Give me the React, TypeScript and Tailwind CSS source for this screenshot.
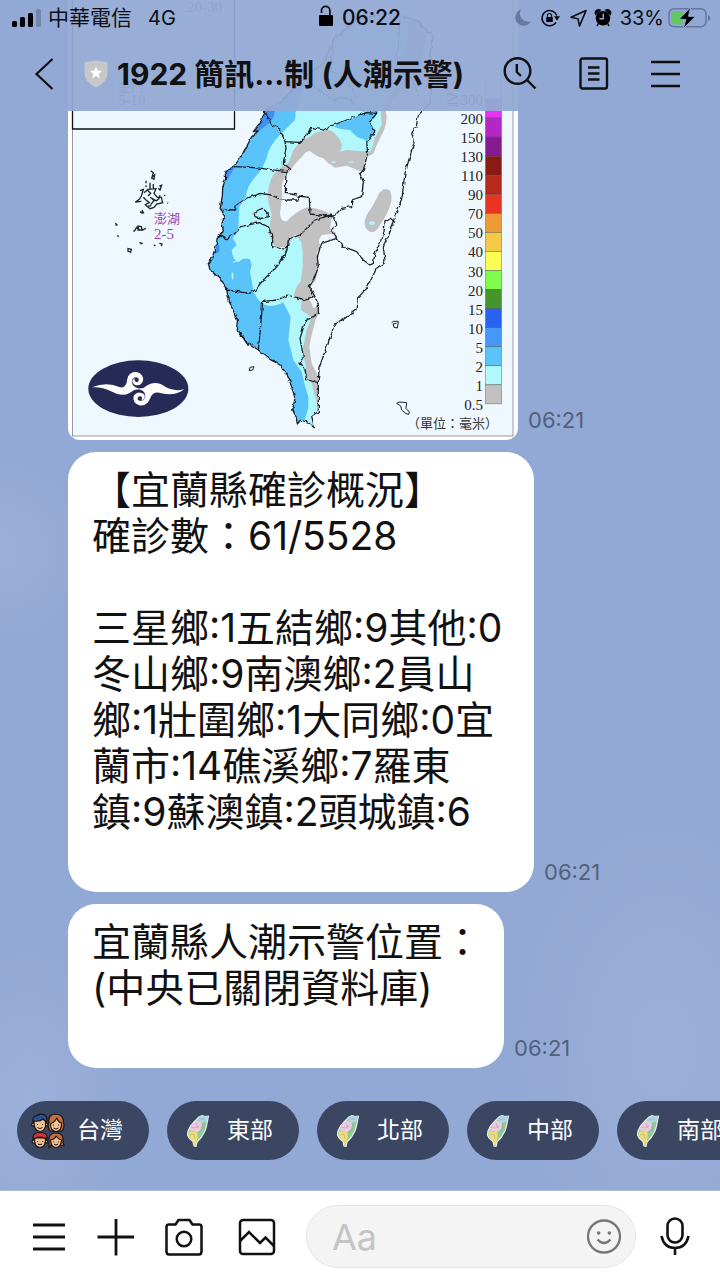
import React from "react";

const SANS = "font-['Inter','Noto_Sans_CJK_TC',sans-serif]";

const scale: { color: string; label: string }[] = [
  { color: "#dfe3f5", label: "" },
  { color: "#e733f5", label: "≧300" },
  { color: "#b625c6", label: "200" },
  { color: "#861a92", label: "150" },
  { color: "#8a1b12", label: "130" },
  { color: "#b8281b", label: "110" },
  { color: "#e83423", label: "90" },
  { color: "#ee9a37", label: "70" },
  { color: "#f4c945", label: "50" },
  { color: "#fffd54", label: "40" },
  { color: "#80fb4c", label: "30" },
  { color: "#45962a", label: "20" },
  { color: "#2962f0", label: "15" },
  { color: "#4598f7", label: "10" },
  { color: "#5ac4fa", label: "5" },
  { color: "#b1f8fd", label: "2" },
  { color: "#c1c1c1", label: "1" },
];

const islandPath =
  "M700 -190 L650 -240 L560 -260 L470 -240 L400 -180 L370 -110 L300 -60 L250 0 L195 33 L185 60 L160 95 L175 92 L155 110 L145 130 L130 160 L105 195 L75 215 L77 235 L68 262 L67 290 L60 328 L74 345 L66 372 L70 390 L52 415 L45 450 L33 480 L25 490 L30 510 L65 540 L80 570 L90 610 L112 660 L110 685 L120 700 L145 730 L175 750 L210 778 L240 795 L262 825 L275 860 L285 895 L278 930 L288 950 L292 972 L302 960 L325 968 L343 983 L335 948 L355 935 L355 850 L357 805 L380 740 L403 675 L435 655 L468 630 L472 595 L500 565 L530 505 L555 485 L550 440 L565 410 L580 360 L605 300 L615 220 L635 150 L643 125 L635 100 L650 75 L655 45 L690 10 L700 -80 L690 -140 Z";

function RainMap() {
  return (
    <svg
      viewBox="68 0 450 440"
      className="block h-auto w-full"
      role="img"
      aria-label="雨量圖"
    >
      <defs>
        <clipPath id="island">
          <path d={islandPath} />
        </clipPath>
        <filter id="rough" x="-5%" y="-5%" width="110%" height="110%">
          <feTurbulence type="fractalNoise" baseFrequency="0.08" numOctaves="1" seed="4" />
          <feDisplacementMap in="SourceGraphic" scale="13" xChannelSelector="R" yChannelSelector="G" />
        </filter>
      </defs>
      <rect x="68" y="0" width="450" height="440" fill="#fff" />
      <rect x="72.5" y="-5" width="440.5" height="441" fill="#eff8ff" stroke="#999" />
      <path d="M72.5 0V129H234.5V0" fill="none" stroke="#111" strokeWidth="1.3" />
      <g fontFamily="'Liberation Serif','Noto Sans CJK TC',serif" fontSize="15" fill="#555">
        <text x="187" y="12">20-30</text>
        <text x="118" y="91" fontSize="13">金門</text>
        <text x="118" y="105">5-10</text>
      </g>
      <g transform="translate(200 100) scale(.33333)">
        <g clipPath="url(#island)">
          <path
            fill="#c1c1c1"
            d="M0 -300H700L660 -100L557 33Q565 60 552 90L530 135L521 160L500 172L486 215L440 197L405 203L385 190L370 175Q350 170 330 153Q315 155 308 168Q285 190 262 222Q240 245 247 285L240 340Q243 370 262 362Q285 337 320 322Q380 328 396 350L390 385L410 400L365 405Q350 425 362 435L350 460L357 500L345 545L330 560L345 590Q320 595 335 610L340 625L357 612L358 640L348 655L335 705L328 740L335 790L355 830V930L330 990H0Z"
          />
          <path
            fill="#b1f8fd"
            d="M0 -300H640L600 -60L542 33L545 75L525 115L512 155L440 150L418 155Q433 140 420 120Q405 95 380 88L345 100L330 110L300 125L280 150L265 190Q225 205 212 240Q200 270 206 310L215 345L205 400L225 442L262 440L285 403L303 425L308 455L308 500L302 545Q285 560 281 590L305 600L303 630L335 652L320 690L308 750L318 800L315 835L335 850L350 905L355 990H0Z"
          />
          <path
            fill="#5ac4fa"
            d="M0 -300H400L288 33L285 60L255 90Q220 120 205 155Q195 200 165 232Q140 260 138 290L118 320L115 390L98 415L110 435L95 450Q98 480 115 487Q130 470 150 478L155 495L150 515L160 570Q165 590 185 610Q210 628 250 607L272 650L265 720L280 780L305 815Q315 860 325 890L325 925L312 965L300 1000H0Z"
          />
          <path
            fill="#5ac4fa"
            d="M402 80L420 65L450 60L500 33H535L525 50L510 65L525 95L500 122L470 110L450 90Q420 88 402 80Z"
          />
          <path
            fill="#4090f3"
            d="M190 30L225 33Q220 65 200 75L150 115L145 90ZM70 208L105 200L85 235L75 232ZM40 435H58V455L45 462Z"
          />
          <path fill="#b1f8fd" d="M285 38L330 33L340 40L290 45ZM95 515Q103 518 99 537Q94 545 95 515ZM97 485L112 482L102 489Z" />
        </g>
        <path fill="#c1c1c1" d="M550 268Q578 260 574 305Q565 340 540 375Q525 405 505 393Q485 375 500 345Q525 310 537 280Z" />
        <ellipse cx="516" cy="370" rx="8" ry="6" fill="#b1f8fd" />
        <path fill="#b1f8fd" d="M393 187Q400 180 408 187Q400 193 393 187ZM444 186Q453 182 462 186Q453 190 444 186Z" />
        <path fill="#eff8ff" d="M332 605L345 592V605L357 612L345 624Z" />
        <g fill="none" stroke="#1b1f26" strokeWidth="3.8" strokeLinejoin="round" filter="url(#rough)">
          <path d={islandPath} />
          <path d="M195 33L215 75L240 87L255 125L300 127L325 100L335 82L370 90L400 75L440 60L470 48L500 38L530 40L510 65L525 95L500 125L503 160L490 210L480 222L490 245L485 290L455 300L455 320L425 325L405 345L395 350L360 345L330 342L328 292L295 288L292 300L258 300M255 125L258 145L250 190L272 208L258 215L256 280L290 285" />
          <path d="M105 200L150 202L185 205L260 215M60 328L105 330L110 315L140 295L180 280L215 285L235 295L260 298M52 405L80 416L105 400L125 380L175 368L205 380L215 405L215 440L250 447L262 445L265 418L300 405L345 360L390 345L405 355L410 375L392 390L410 415L365 430L352 470L355 500L345 530L328 560L345 590L355 615L355 640L330 655L317 662L300 715L310 770L300 790L315 810L320 840L355 848" />
          <path d="M262 447L255 465L240 485L215 515L190 540L165 570L150 580L80 570M175 750L180 700L188 605L230 600L262 585L300 595L312 603L345 590M410 415L430 440L470 455L490 480L510 495L520 490L525 460L545 420L552 395L555 365L575 355L585 365" />
          <path d="M163 340L175 330L188 325L205 342L205 350L185 355L165 350ZM112 685L140 730M115 690L125 700L120 705L135 718L145 738" />
          <path d="M250 0L285 -35L330 -50L400 0L440 -10L470 20L500 38M400 -180L390 -90L440 -60L470 -10M600 -240L590 -100L640 -60L655 -10" strokeWidth="3" />
        </g>
        <path
          d="M575 668L580 664L595 664L594 672L592 684L582 682L579 672L590 670M590 910L598 906L620 908L618 925L628 936L626 943L618 941L605 930L602 918ZM150 802L162 800L158 810L148 812Z"
          fill="none"
          stroke="#1b1f26"
          strokeWidth="3"
        />
      </g>
      <g transform="translate(60 110) scale(.33333)">
        <g fill="none" stroke="#20262e" strokeWidth="4">
          <path d="M272 182L280 188L276 202L284 195L282 208L274 204M258 212V220M258 226V232M270 218V236M280 222V238M298 228L305 226L300 240L295 235M240 242L250 238L244 258L238 268L226 276L244 274M252 248L262 240L272 250L264 258M262 238L288 236L282 250L292 262L304 262L308 278L290 282L282 292L270 296L256 284L268 278L258 270L250 262M276 268L290 272L296 266M262 290L274 286M300 256L296 268M314 254V258M270 262L284 270L272 284M322 278L324 280M240 306L250 308L246 300M240 306L248 310" />
          <path d="M166 340L172 346L166 344M172 376L176 380M220 364L224 362L230 352L236 358L234 348L244 350L246 360L258 355M232 360H250M238 398L246 400L242 403M204 416L214 418L212 426L204 424ZM212 426V430M282 404L286 408M298 400L306 402L304 408" />
        </g>
        <ellipse cx="235" cy="836" rx="150" ry="85" fill="#252a57" />
        <path
          fill="#fff"
          d="M96 832Q140 813 180 832Q199 836 202 806Q208 783 230 786Q252 792 249 812Q242 830 224 824Q210 814 224 805Q222 815 231 817Q239 813 235 805Q226 798 217 808Q212 822 226 832Q246 842 262 826Q290 810 318 832Q342 846 373 838Q345 860 304 850Q280 842 272 862Q262 890 238 886Q216 878 221 858Q233 840 252 852Q260 866 244 872Q250 862 240 858Q230 861 234 870Q250 878 256 862Q258 842 236 838Q222 838 210 848Q185 862 158 846Q128 830 96 832Z"
        />
      </g>
      <g fontFamily="'Liberation Serif','Noto Sans CJK TC',serif" fill="#a43bb0">
        <text x="154" y="223" fontSize="13">澎湖</text>
        <text x="154" y="239" fontSize="15">2-5</text>
      </g>
      <g fontFamily="'Liberation Serif','Noto Sans CJK TC',serif" fontSize="15" fill="#222" textAnchor="end">
        {scale.map((s, i) => (
          <g key={i}>
            <rect x="485.5" y={80 + i * 19.05} width="16" height="19.05" fill={s.color} stroke="#444" strokeOpacity=".55" strokeWidth=".7" />
            <text x="483" y={86 + i * 19.05}>{s.label}</text>
          </g>
        ))}
        <text x="483" y="409.5">0.5</text>
      </g>
      <text x="407" y="428" fontSize="13" fill="#333" fontFamily="'Noto Sans CJK TC',sans-serif">
        （單位：毫米）
      </text>
    </svg>
  );
}

function StatusBar() {
  return (
    <div className="grid h-9 grid-cols-3 items-center text-[20px] text-[#0b0d12]">
      <div className="flex items-center pl-3">
        <svg viewBox="0 0 30 19" className="h-[19px] w-[30px]" aria-hidden="true">
          <rect x="0" y="12" width="5" height="6" rx="1.6" />
          <rect x="8" y="8" width="5" height="10" rx="1.6" />
          <rect x="16" y="4" width="5" height="14" rx="1.6" />
          <rect x="24" y="0" width="5" height="18" rx="1.6" fill="#7386ad" />
        </svg>
        <span className="ml-[6px] text-[21px]">中華電信</span>
        <span className="ml-4">4G</span>
      </div>
      <div className="flex items-center justify-center gap-2">
        <svg viewBox="0 0 15 22" className="-mt-1 h-[22px] w-[15px]" aria-hidden="true">
          <rect x="0" y="10" width="14" height="11" rx="1" />
          <path d="M2.5 8V5.5a4.2 4.2 0 0 1 8.4 0V11" fill="none" stroke="#0b0d12" strokeWidth="1.7" />
        </svg>
        <span className="text-[21px] font-medium">06:22</span>
      </div>
      <div className="flex items-center justify-end pr-[9px]">
        <svg viewBox="0 0 97 20" className="mr-2 h-[20px] w-[97px]" aria-hidden="true">
          <path d="M6 1.5A8.3 8.3 0 1 0 16 13.2A8.2 8.2 0 0 1 6 1.5Z" fill="#66799f" />
          <path d="M41 14.300A7.6 7.6 0 1 1 41.8 7.500" fill="none" stroke="#0b0d12" strokeWidth="1.5" />
          <path d="M39 8.2h6l-3 4.3z" />
          <rect x="31.2" y="9" width="6.6" height="5" rx=".8" />
          <path d="M32.4 9V7.6a2.1 2.1 0 0 1 4.2 0V9" fill="none" stroke="#0b0d12" strokeWidth="1.1" />
          <path d="M71 2.600L56 9.200L63 10.800L64.500 18Z" fill="none" stroke="#0b0d12" strokeWidth="1.6" strokeLinejoin="round" />
          <circle cx="88" cy="10.3" r="7.2" />
          <path d="M80.800 6.5a3.2 3.2 0 0 1 4.5-4.3zM95.200 6.5a3.2 3.2 0 0 0-4.5-4.3zM83.500 15.5l-1.6 2.5M92.500 15.5l1.6 2.5" stroke="#0b0d12" strokeWidth="1.4" />
          <path d="M88.300 5.6v5.2h-3.8" fill="none" stroke="#93a9d5" strokeWidth="1.4" />
        </svg>
        <span>33%</span>
        <svg viewBox="0 0 43 22" className="ml-1 h-[22px] w-[43px]" aria-hidden="true">
          <rect x="1" y="1.8" width="37" height="18" rx="5" fill="none" stroke="#6576a0" strokeWidth="1.5" />
          <path d="M40 8v6q2.5-1 2.5-3T40 8Z" fill="#6576a0" />
          <rect x="3.2" y="4" width="12" height="13.6" rx="3" fill="#64c466" />
          <path d="M22.5 0.5L11 12.4H17.8L15.5 21.5L27.5 9.3H20.5Z" stroke="#93a9d5" strokeWidth="1" />
        </svg>
      </div>
    </div>
  );
}

function TitleBar() {
  return (
    <div className="flex h-[75px] items-center pr-10 pl-[34px]">
      <button aria-label="返回" className="h-8 w-5">
        <svg viewBox="0 0 20 32" className="h-8 w-5" fill="none" stroke="#111" strokeWidth="2.2">
          <path d="M18.5 1L2.5 16L18.5 31" />
        </svg>
      </button>
      <svg viewBox="0 0 24 28" className="ml-[30px] h-7 w-6 shrink-0" aria-hidden="true">
        <path d="M12 .5Q18 1 23.5 2.4V13Q23.5 22 12 27.5Q.5 22 .5 13V2.4Q6 1 12 .5Z" fill="#c6c7c9" />
        <path d="M12 6.5l1.8 3.9 4.2.5-3.1 2.9.8 4.2-3.7-2.1-3.7 2.1.8-4.2L6 10.900l4.200-.5z" fill="#fff" />
      </svg>
      <h1 className="ml-[9px] text-[30px] leading-10 font-bold whitespace-nowrap text-[#111]">1922 簡訊...制 (人潮示警)</h1>
      <div className="ml-auto flex items-center gap-[42px]">
        <button aria-label="搜尋">
          <svg viewBox="0 0 34 36" className="h-9 w-[34px]" fill="none" stroke="#111" strokeWidth="2.4">
            <circle cx="14.500" cy="15" r="12.800" />
            <path d="M24 24L32.500 32.500M13.800 8V16L18 20" />
          </svg>
        </button>
        <button aria-label="記事本">
          <svg viewBox="0 0 30 34" className="h-[34px] w-[30px]" fill="none" stroke="#111" strokeWidth="2.400">
            <rect x="1.500" y="1.500" width="26.500" height="30" rx="2" />
            <path d="M9 10.500H20.500M9 16.500H20.500M9 22.500H20.500" />
          </svg>
        </button>
        <button aria-label="選單">
          <svg viewBox="0 0 29 28" className="h-7 w-[29px]" stroke="#111" strokeWidth="2.400">
            <path d="M0 2H29M0 14H29M0 26H29" />
          </svg>
        </button>
      </div>
    </div>
  );
}

function Message({ children, className = "" }: { children: React.ReactNode; className?: string }) {
  return (
    <div className="flex items-end gap-[10px]">
      <div className={`rounded-[28px] bg-white pt-[15px] pb-[11px] pl-6 text-[39px] leading-[46px] whitespace-pre text-[#111] ${className}`}>
        {children}
      </div>
      <Time />
    </div>
  );
}

function Time() {
  return <time className="pb-2 text-[22px] leading-6 text-[#53607c]">06:21</time>;
}

function FamilyIcon() {
  return (
    <svg viewBox="0 0 34 36" className="h-9 w-[34px]" stroke="#1a1512" strokeWidth="1.200" strokeLinejoin="round" aria-hidden="true">
      <path d="M18 9Q17 1 25 1Q33 2 32.500 10Q34 14 31 18H19Q16 14 18 9Z" fill="#c9703f" />
      <path d="M19.500 11Q24 9 26 5Q27 9 30.500 10Q31 18 25 18.500Q19.500 18 19.500 11Z" fill="#f2c795" />
      <path d="M2 9Q1 4 5 3Q9 0 14 2Q17 4 15.500 9Z" fill="#27509a" />
      <circle cx="2.300" cy="11.500" r="1.600" fill="#f2c795" />
      <circle cx="15.200" cy="11.500" r="1.600" fill="#f2c795" />
      <path d="M3 8Q9 9 12 6L14.500 8.500Q15.500 18 9 18.500Q2.500 18 3 8Z" fill="#f2c795" />
      <path d="M18 29Q17 20 25 20Q33 20 32 29L33 33L29 32H20L18 35Z" fill="#c9703f" />
      <path d="M19.500 27Q24 26 25 23Q27 26 30.500 27Q30 34.500 25 34.500Q20 34.500 19.500 27Z" fill="#f0bd8a" />
      <circle cx="2.800" cy="28.500" r="1.600" fill="#f0bd8a" />
      <circle cx="15" cy="28.500" r="1.600" fill="#f0bd8a" />
      <path d="M3.500 25H14.500Q15 34.500 9 34.500Q3 34.500 3.500 25Z" fill="#f0bd8a" />
      <path d="M2 26Q1 19.500 9 19.500Q17 19.500 16 26Q9 22 2 26Z" fill="#d8303c" />
      <path d="M6.500 11v1M11.500 11v1M6.500 14.500q2.500 2.200 5 0M22.500 11.500v1M27.500 11.500v1M22.500 15q2.500 2 5 0M6.500 28v1M11.500 28v1M7 31q2 1.500 4 0M22.800 28.500v1M27.300 28.500v1M23 31.200q2 1.500 4 0" fill="none" strokeWidth="1" />
    </svg>
  );
}

function TaiwanIcon() {
  return (
    <svg viewBox="0 0 24 34" className="h-[34px] w-6" strokeLinejoin="round" aria-hidden="true">
      <path d="M13 3L16 1.500L19 2.500L22.500 2L21.500 7L20.500 12L19 17L15.500 23L11 28L10 32.500L8 32L7 27.500L3 24L1.500 21L2 17L4.500 12L8.500 7.500Z" fill="#8fcb98" stroke="#eef2ee" strokeWidth="1.200" />
      <path d="M13 3L16 1.500L19 2.500L22.500 2L20.500 7.500L16 8.500L11.500 6Z" fill="#a9d8e6" />
      <path d="M10.500 6.500L16.500 8.500L15 15L11 18.500L3 16L5.500 11Z" fill="#ebc9de" />
      <path d="M2.500 17L11.500 18.500L11.500 24L9.500 31L8 30.500L7.500 27L3 22.500Z" fill="#f1df6a" />
      <path d="M5 13L9 14L13 12M10 9L12 14M4 21L8 20L9 25M16 9L17 14L13 19M13 5L19 5" fill="none" stroke="#9f96a3" strokeWidth=".5" />
    </svg>
  );
}

function Chip({ label, family = false }: { label: string; family?: boolean }) {
  return (
    <button className="flex h-[59px] w-[132px] shrink-0 items-center rounded-full bg-[#3b4662] pl-[14px] text-[23px] text-white">
      <span className="flex w-[34px] justify-center">{family ? <FamilyIcon /> : <TaiwanIcon />}</span>
      <span className="ml-3">{label}</span>
    </button>
  );
}

function Composer() {
  return (
    <footer className="flex items-center border-t border-[#a9bee2] bg-white pt-[14px] pr-[30px] pb-3 pl-8">
      <div className="flex shrink-0 items-center gap-[31px]">
        <button aria-label="選單">
          <svg viewBox="0 0 33 28" className="h-7 w-[33px]" stroke="#111" strokeWidth="2.800">
            <path d="M1 2H33M1 14H33M1 26H33" />
          </svg>
        </button>
        <button aria-label="新增">
          <svg viewBox="0 0 38 38" className="h-[38px] w-[38px]" stroke="#111" strokeWidth="2.800">
            <path d="M1.500 19H38M20 1V37.500" />
          </svg>
        </button>
        <button aria-label="相機">
          <svg viewBox="0 0 38 38" className="h-[38px] w-[38px]" fill="none" stroke="#111" strokeWidth="2.500" strokeLinejoin="round">
            <path d="M4 6.500H10.500L13.500 2H24.500L27.500 6.500H34Q36.500 6.500 36.500 9V33.500Q36.500 36.500 34 36.500H4Q1.500 36.500 1.500 33.500V9Q1.500 6.500 4 6.500Z" />
            <circle cx="19" cy="21" r="7.300" />
          </svg>
        </button>
        <button aria-label="相簿">
          <svg viewBox="0 0 38 38" className="ml-1 h-[38px] w-[38px]" fill="none" stroke="#111" strokeWidth="2.500">
            <rect x="2" y="2" width="34" height="34" rx="3" />
            <path d="M2 23L11 14L22 25L27.500 19.500L36 28" />
          </svg>
        </button>
      </div>
      <label className="ml-[30px] flex h-[63px] min-w-0 flex-1 items-center rounded-full border border-[#e6e6e6] bg-[#f4f4f4] pr-[13px] pl-[25px]">
        <input aria-label="訊息" placeholder="Aa" className="min-w-0 flex-1 bg-transparent text-[36px] leading-10 outline-none placeholder:text-[#c4c4c4]" />
        <button aria-label="表情">
          <svg viewBox="0 0 36 36" className="h-9 w-9" fill="none" stroke="#777" strokeWidth="2.300">
            <circle cx="18" cy="17.500" r="16" />
            <path d="M11.500 20.500Q18 27.500 24.500 20.500" />
            <circle cx="12.700" cy="14" r="1.800" fill="#777" stroke="none" />
            <circle cx="23.300" cy="14" r="1.800" fill="#777" stroke="none" />
          </svg>
        </button>
      </label>
      <button aria-label="語音" className="ml-6">
        <svg viewBox="0 0 30 40" className="h-10 w-[30px]" fill="none" stroke="#111" strokeWidth="2.600">
          <rect x="7.500" y="1.500" width="15" height="24" rx="7.500" />
          <path d="M1.500 19Q4 31 15 31T28.500 19M15 31V38" />
        </svg>
      </button>
    </footer>
  );
}

export default function App() {
  return (
    <div
      className={`flex min-h-screen flex-col overflow-hidden bg-[#93a9d5] bg-[radial-gradient(ellipse_at_92%_82%,#9aafd9_0%,#9aafd900_16%),radial-gradient(ellipse_at_0%_43%,#9ab0da_0%,#9ab0da00_9%),radial-gradient(ellipse_at_4%_86%,#9bb1da_0%,#9bb1da00_10%)] ${SANS}`}
    >
      <header className="sticky top-0 z-10 bg-[#93a9d5]/94">
        <StatusBar />
        <TitleBar />
      </header>
      <main className="-mt-[111px] flex flex-1 flex-col gap-3 pl-[68px]">
        <div className="flex items-end gap-[10px]">
          <div className="w-[450px] overflow-hidden rounded-b-xl">
            <RainMap />
          </div>
          <Time />
        </div>
        <Message className="w-[466px]">
          {"【宜蘭縣確診概況】\n確診數：61/5528\n\n三星鄉:1五結鄉:9其他:0\n冬山鄉:9南澳鄉:2員山\n鄉:1壯圍鄉:1大同鄉:0宜\n蘭市:14礁溪鄉:7羅東\n鎮:9蘇澳鎮:2頭城鎮:6\n "}
        </Message>
        <Message className="pr-[22px]">{"宜蘭縣人潮示警位置：\n(中央已關閉資料庫)\n "}</Message>
      </main>
      <nav aria-label="地區" className="flex gap-[18px] overflow-hidden pb-[30px] pl-[17px]">
        <Chip label="台灣" family />
        <Chip label="東部" />
        <Chip label="北部" />
        <Chip label="中部" />
        <Chip label="南部" />
      </nav>
      <Composer />
    </div>
  );
}
